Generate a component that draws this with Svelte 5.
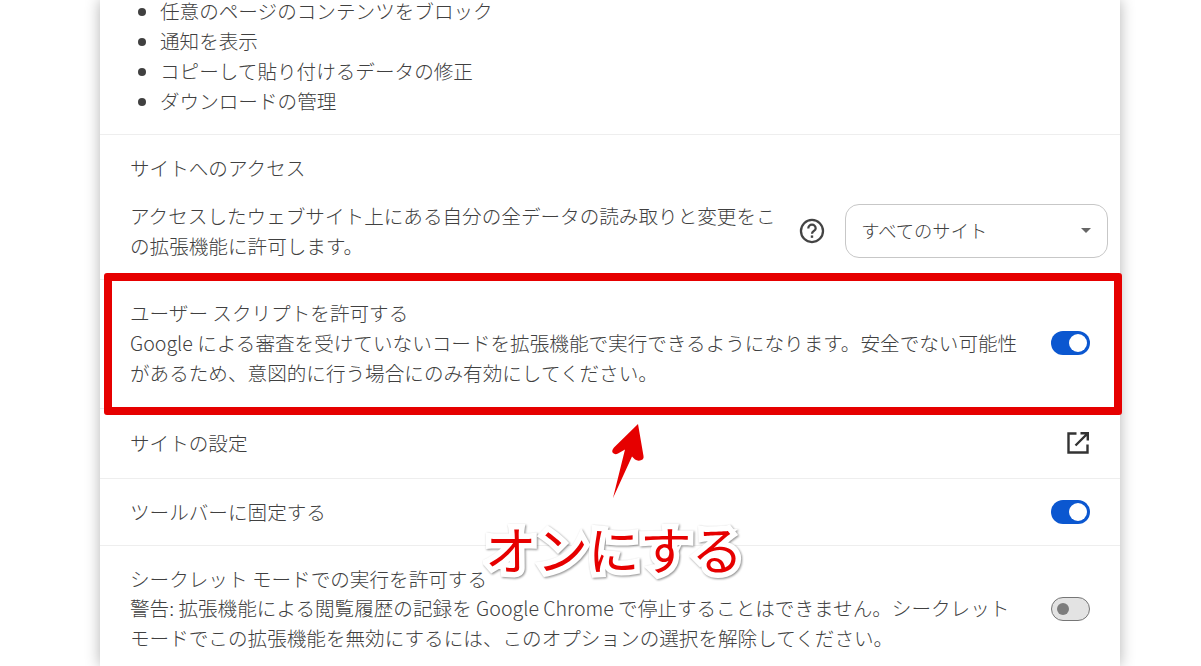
<script>
	const permissions = [
		'任意のページのコンテンツをブロック',
		'通知を表示',
		'コピーして貼り付けるデータの修正',
		'ダウンロードの管理'
	];
</script>

<main>
	<div class="card">
		<ul class="perms">
			{#each permissions as item}
				<li>{item}</li>
			{/each}
		</ul>

		<section class="access">
			<div class="title">サイトへのアクセス</div>
			<div class="access-row">
				<p class="access-text">アクセスしたウェブサイト上にある自分の全データの読み取りと変更をこの拡張機能に許可します。</p>
				<svg class="help" viewBox="0 0 24 24" width="26" height="26">
					<circle cx="12" cy="12" r="10.2" fill="none" stroke="#444" stroke-width="2.1" />
					<path d="M8.6 9.6a3.4 3.4 0 0 1 6.8 0c0 2.3-3.4 2.4-3.4 5" fill="none" stroke="#444" stroke-width="2.1" />
					<rect x="10.9" y="16.1" width="2.2" height="2.2" fill="#444" />
				</svg>
				<div class="select">
					<span>すべてのサイト</span>
					<i class="caret"></i>
				</div>
			</div>
		</section>

		<section class="row user">
			<div class="text">
				<div>ユーザー スクリプトを許可する</div>
				<div class="desc">Google による審査を受けていないコードを拡張機能で実行できるようになります。安全でない可能性があるため、意図的に行う場合にのみ有効にしてください。</div>
			</div>
			<span class="toggle on"></span>
		</section>

		<section class="row single settings">
			<div>サイトの設定</div>
			<svg class="open" viewBox="0 0 24 24" width="24" height="24">
				<path d="M10.5 2.5H2.500v19h19v-8" fill="none" stroke="#333" stroke-width="2.4" />
				<path d="M14.5 2.2h7.3v7.3M21 3 9.500 14.5" fill="none" stroke="#333" stroke-width="2.4" />
			</svg>
		</section>

		<section class="row single pin">
			<div>ツールバーに固定する</div>
			<span class="toggle on"></span>
		</section>

		<section class="row incognito">
			<div class="text">
				<div>シークレット モードでの実行を許可する</div>
				<div class="desc">警告: 拡張機能による閲覧履歴の記録を Google Chrome で停止することはできません。シークレット モードでこの拡張機能を無効にするには、このオプションの選択を解除してください。</div>
			</div>
			<span class="toggle off"></span>
		</section>
	</div>

	<!-- annotation drawn over the page -->
	<div class="frame"></div>
	<svg class="arrow" viewBox="0 0 40 80" width="40" height="80">
		<path d="M32 1 8 24.500Q5 28 7 30Q9 32 12 30.500L19 26.500 7 75 26 33.500 29 36.500Q32 38.500 35.500 37Q38 36 37.500 33Z" fill="#e60000" />
	</svg>
	<div class="label">オンにする</div>
</main>

<style>
	:global(body) {
		margin: 0;
		background: #fff;
	}

	main {
		position: relative;
		height: 666px;
		overflow: hidden;
		font-family: "Noto Sans CJK JP", "Liberation Sans", sans-serif;
		font-size: 19.6px;
		line-height: 30px;
		color: #404040;
		font-weight: 300;
	}

	.card {
		width: 1020px;
		margin-left: 100px;
		background: #fff;
		box-shadow: 0 0 14px rgba(0, 0, 0, 0.3);
	}

	.perms {
		margin: 0;
		padding: 0 30px 18px 60px;
	}

	/* top of the list is scrolled away in the shot */
	.perms li:first-child {
		line-height: 22px;
		margin-bottom: 4px;
	}

	.access {
		border-top: 1px solid #eee;
		padding: 18px 12px 18px 30px;
	}

	.access-row {
		display: flex;
		align-items: center;
		margin-top: 18px;
	}

	.access-text {
		margin: 0;
		width: 650px;
	}

	.help {
		margin-left: 20px;
	}

	.select {
		display: flex;
		align-items: center;
		justify-content: space-between;
		box-sizing: border-box;
		width: 263px;
		height: 54px;
		margin-left: 20px;
		padding: 0 16px 2px 15px;
		border: 1px solid #c7c7c7;
		border-radius: 14px;
		font-size: 18.3px;
	}

	.caret {
		width: 0;
		height: 0;
		border-left: 5px solid transparent;
		border-right: 5px solid transparent;
		border-top: 5px solid #666;
	}

	.row {
		display: flex;
		align-items: center;
		justify-content: space-between;
		padding: 0 30px;
		border-top: 1px solid #eee;
	}

	.user {
		padding-top: 18px;
		padding-bottom: 20px;
	}

	.single {
		height: 66px;
	}

	.settings {
		height: 67px;
		padding-bottom: 2px;
	}

	.incognito {
		padding-top: 18px;
		padding-bottom: 13px;
	}

	.incognito .desc {
		margin-top: -1px;
	}

	.text {
		width: 890px;
	}

	.toggle {
		position: relative;
		flex: none;
		box-sizing: border-box;
		width: 39px;
		height: 24px;
		border-radius: 12px;
	}

	.toggle::after {
		content: "";
		position: absolute;
		top: 50%;
		border-radius: 50%;
		transform: translateY(-50%);
	}

	.on {
		background: #0b57d0;
	}

	.on::after {
		right: 3px;
		width: 18px;
		height: 18px;
		background: #fff;
	}

	.off {
		background: #e3e3e3;
		border: 1px solid #767676;
	}

	.off::after {
		left: 5px;
		width: 12px;
		height: 12px;
		background: #7d7d7d;
	}

	.frame {
		position: absolute;
		left: 104px;
		top: 273px;
		width: 1018px;
		height: 142px;
		box-sizing: border-box;
		border: 8px solid #e60000;
		border-radius: 3px;
	}

	.arrow {
		position: absolute;
		left: 606px;
		top: 423px;
	}

	.label {
		position: absolute;
		left: 485px;
		top: 510px;
		font-size: 51.5px;
		line-height: 76px;
		font-weight: 400;
		color: #e60000;
		-webkit-text-stroke: 11px #fff;
		paint-order: stroke fill;
		filter: drop-shadow(1px 1px 1px rgba(0, 0, 0, 0.45));
	}
</style>
